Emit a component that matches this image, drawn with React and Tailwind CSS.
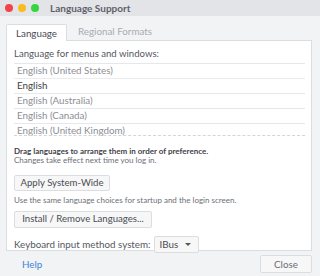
import React from 'react';

const languages = [
  { name: 'English (United States)', dim: true },
  { name: 'English', dim: false },
  { name: 'English (Australia)', dim: true },
  { name: 'English (Canada)', dim: true },
  { name: 'English (United Kingdom)', dim: true },
];

export default function App() {
  return (
    <div
      className="w-[320px] h-[276px] bg-[#f2f3f5] flex flex-col overflow-hidden text-[#4a4c53] whitespace-nowrap"
      style={{ fontFamily: 'Lato, "Noto Sans", sans-serif' }}
    >
      {/* Title bar */}
      <div className="h-[16px] bg-[#e3e4e8] flex items-center pl-[5px] shrink-0">
        <span className="w-[8px] h-[8px] rounded-full bg-[#f3424a]" />
        <span className="w-[8px] h-[8px] rounded-full bg-[#f8bb21] ml-[5px]" />
        <span className="w-[8px] h-[8px] rounded-full bg-[#33d63e] ml-[5px]" />
        <span className="ml-[11px] text-[10px] font-bold text-[#5e616b] leading-none">Language Support</span>
      </div>

      {/* Tabs */}
      <div className="flex items-end pl-[6px] h-[24px]">
        <div className="w-[61px] h-[17px] bg-white border border-[#dcdde1] border-b-0 rounded-t-[2px] flex items-center justify-center text-[9.8px] text-[#4a4c53] relative top-[1px] z-10">
          Language
        </div>
        <div className="ml-[11px] h-[17px] flex items-center text-[9.8px] text-[#a9abb1]">Regional Formats</div>
      </div>

      {/* Panel */}
      <div className="ml-[6px] mr-[8px] h-[211px] bg-white border border-[#dcdde1] flex flex-col px-[7px] pt-[6px]">
        <div className="text-[9.6px] leading-[14px] text-[#55575e]">Language for menus and windows:</div>
        <div className="mt-[2px] mr-[-1px] flex flex-col">
          {languages.map((l, i) => (
            <div
              key={i}
              className={`h-[15px] border-t ${i === 1 ? 'border-[#ececef]' : 'border-[#e6e7ea]'} flex items-center pl-[3px] text-[9.8px] leading-none ${l.dim ? 'text-[#8c8e95]' : 'text-[#3c3e45]'}`}
            >
              {l.name}
            </div>
          ))}
          <div className="border-t border-dashed border-[#d4d5d9] h-0 mt-[-3px]" />
        </div>

        <div className="mt-[11px] text-[8px] leading-[9px] font-bold text-[#3f4148]">
          Drag languages to arrange them in order of preference.
        </div>
        <div className="text-[8px] leading-[9px] text-[#6d6f76]">Changes take effect next time you log in.</div>

        <button className="mt-[10px] w-[96px] h-[18px] border border-[#dcdde1] rounded-[2px] bg-[#f7f7f8] text-[9.6px] text-[#4a4c53] flex items-center justify-center">
          Apply System-Wide
        </button>

        <div className="mt-[5px] text-[8px] leading-[9px] text-[#6d6f76]">
          Use the same language choices for startup and the login screen.
        </div>

        <button className="mt-[6px] w-[138px] h-[18px] border border-[#dcdde1] rounded-[2px] bg-[#f7f7f8] text-[9.6px] text-[#4a4c53] flex items-center justify-center">
          Install / Remove Languages...
        </button>

        <div className="mt-[8px] flex items-center">
          <span className="text-[9.8px] text-[#55575e]">Keyboard input method system:</span>
          <button className="ml-[3px] w-[45px] h-[17px] border border-[#dcdde1] rounded-[2px] bg-[#f7f7f8] text-[9.8px] text-[#4a4c53] flex items-center pl-[5px]">
            IBus
            <span className="ml-[7px] w-0 h-0 border-l-[3px] border-r-[3px] border-t-[3px] border-l-transparent border-r-transparent border-t-[#55575e]" />
          </button>
        </div>
      </div>

      {/* Footer */}
      <div className="flex items-center justify-between pl-[22px] pr-[8px] mt-[4px]">
        <span className="text-[9.8px] text-[#3d83d6]">Help</span>
        <button className="w-[52px] h-[18px] border border-[#dcdde1] rounded-[2px] bg-[#f7f7f8] text-[9.8px] text-[#6a6c73] flex items-center justify-center">
          Close
        </button>
      </div>
    </div>
  );
}
